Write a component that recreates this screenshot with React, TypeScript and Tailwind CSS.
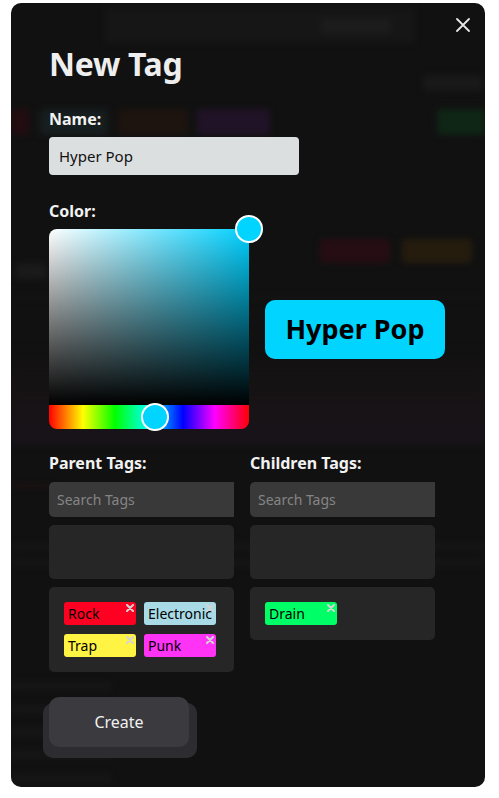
import React from "react";

const Chip = ({ label, color }: { label: string; color: string }) => (
  <div
    className="relative h-[23px] w-[72px] rounded-[3px] pl-[4px] text-[14px] leading-[23px] text-black whitespace-nowrap"
    style={{ background: color }}
  >
    {label}
    <svg className="absolute right-[2px] top-[2px]" width="8" height="8" viewBox="0 0 8 8">
      <path d="M1 1L7 7M7 1L1 7" stroke="#d4d4d4" strokeWidth="2" strokeLinecap="round" />
    </svg>
  </div>
);

const TagColumn = ({ title, chips }: { title: string; chips: { label: string; color: string }[] }) => (
  <div className="flex w-[185px] flex-col">
    <div className="text-[16px] font-bold leading-[24px] text-[#f2f2f2]">{title}</div>
    <div className="mt-[7px] h-[35px] rounded-l-[5px] bg-[#393939] pl-[8px] text-[14px] leading-[35px] text-[#858585]">
      Search Tags
    </div>
    <div className="mt-[8px] h-[54px] rounded-[5px] bg-[#262626]" />
    <div className="mt-[8px] grid grid-cols-[72px_72px] gap-x-[8px] gap-y-[9px] rounded-[5px] bg-[#262626] p-[15px]">
      {chips.map((c) => (
        <Chip key={c.label} label={c.label} color={c.color} />
      ))}
    </div>
  </div>
);

const BgBackdrop = () => (
  <div className="absolute inset-0 flex flex-col blur-[3px]">
    <div className="ml-[94px] mt-[5px] flex h-[35px] w-[310px] items-center justify-end rounded bg-[#161616] pr-[24px]">
      <div className="h-[14px] w-[70px] rounded bg-[#1c1c1c]" />
    </div>
    <div className="mt-[32px] flex justify-end pr-[2px]">
      <div className="h-[16px] w-[60px] rounded bg-[#191919]" />
    </div>
    <div className="mt-[18px] flex items-center">
      <div className="h-[26px] w-[18px] rounded bg-[#230d11]" />
      <div className="ml-[11px] h-[26px] w-[68px] rounded bg-[#171e1f]" />
      <div className="ml-[10px] h-[26px] w-[70px] rounded bg-[#1d140f]" />
      <div className="ml-[9px] h-[26px] w-[73px] rounded bg-[#211327]" />
      <div className="ml-auto h-[26px] w-[48px] rounded bg-[#0f2616]" />
    </div>
    <div className="mt-[104px] flex">
      <div className="ml-[309px] h-[24px] w-[70px] rounded bg-[#260d14]" />
      <div className="ml-[12px] h-[24px] w-[70px] rounded bg-[#251c0e]" />
    </div>
    <div className="ml-[4px] h-[16px] w-[32px] rounded bg-[#1a1a1a]" />
    <div className="mt-[18px] h-[1px] w-full bg-[#181818]" />
    <div className="mt-[47px] h-[100px] w-full bg-gradient-to-b from-[#14121300] via-[#171315] to-[#18131a]" />
    <div className="mt-[40px] h-[2px] w-[40px] bg-[#2a1012]" />
    <div className="mt-[56px] h-[7px] w-full bg-[#161616]" />
    <div className="mt-[9px] h-[7px] w-full bg-[#161616]" />
    <div className="mt-[116px] flex flex-col gap-[15px]">
      <div className="h-[8px] w-[100px] bg-[#171717]" />
      <div className="h-[8px] w-[100px] bg-[#171717]" />
      <div className="h-[8px] w-[100px] bg-[#171717]" />
      <div className="h-[8px] w-[100px] bg-[#171717]" />
      <div className="h-[8px] w-[100px] bg-[#171717]" />
    </div>
  </div>
);

export default function App() {
  return (
    <div className="h-[798px] w-full bg-white pl-[11px] pt-[3px] font-['Noto_Sans',sans-serif]">
      <div className="relative h-[784px] w-[474px] overflow-hidden rounded-[10px] bg-[#111111]">
        <BgBackdrop />

        <div className="relative flex flex-col pl-[38px] pt-[15px]">
          <div className="flex justify-end pr-[15px]">
            <svg width="14" height="14" viewBox="0 0 14 14">
              <path d="M1 1L13 13M13 1L1 13" stroke="#e6e6e6" strokeWidth="1.8" strokeLinecap="round" />
            </svg>
          </div>
          <div className="mt-[10px] text-[32px] font-bold leading-[44px] tracking-[-0.3px] text-[#eeeeee]">New Tag</div>

          <div className="mt-[21px] text-[16px] font-bold leading-[24px] text-[#f2f2f2]">Name:</div>
          <div className="mt-[6px] h-[38px] w-[250px] rounded-[4px] bg-[#dcdfe0] pl-[10px] text-[15px] leading-[38px] text-[#111]">
            Hyper Pop
          </div>

          <div className="mt-[24px] text-[16px] font-bold leading-[24px] text-[#f2f2f2]">Color:</div>
          <div className="mt-[6px] flex items-center gap-[16px]">
            <div className="relative w-[200px]">
              <div
                className="h-[176px] rounded-t-[8px]"
                style={{
                  background:
                    "linear-gradient(to top, #000 0%, rgba(0,0,0,0) 100%), linear-gradient(to right, #fff 0%, hsl(191,100%,50%) 100%)",
                }}
              />
              <div
                className="h-[24px] rounded-b-[8px]"
                style={{
                  background:
                    "linear-gradient(to right, #ff0000 0%, #ffff00 17%, #00ff00 33%, #00ffff 50%, #0000ff 67%, #ff00ff 83%, #ff0000 100%)",
                }}
              />
              <div className="absolute left-[186px] top-[-14px] h-[28px] w-[28px] rounded-full border-2 border-white bg-[#00d4ff]" />
              <div className="absolute left-[92px] top-[174px] h-[28px] w-[28px] rounded-full border-2 border-white bg-[#00d4ff]" />
            </div>
            <div className="flex h-[59px] w-[180px] items-center justify-center rounded-[10px] bg-[#00d4ff] text-[27px] font-bold text-black">
              Hyper Pop
            </div>
          </div>

          <div className="mt-[22px] flex items-start gap-[16px]">
            <TagColumn
              title="Parent Tags:"
              chips={[
                { label: "Rock", color: "#ff0022" },
                { label: "Electronic", color: "#a8dbe6" },
                { label: "Trap", color: "#fff344" },
                { label: "Punk", color: "#ff33f5" },
              ]}
            />
            <TagColumn title="Children Tags:" chips={[{ label: "Drain", color: "#00ff66" }]} />
          </div>

          <div className="ml-[-6px] mt-[31px] flex h-[55px] w-[154px] rounded-[10px] bg-[#2d2c31]">
            <button className="ml-[6px] mt-[-6px] h-[50px] w-[140px] rounded-[10px] bg-[#3b3a3f] text-[16px] text-[#f0f0f0]">
              Create
            </button>
          </div>
        </div>
      </div>
    </div>
  );
}
